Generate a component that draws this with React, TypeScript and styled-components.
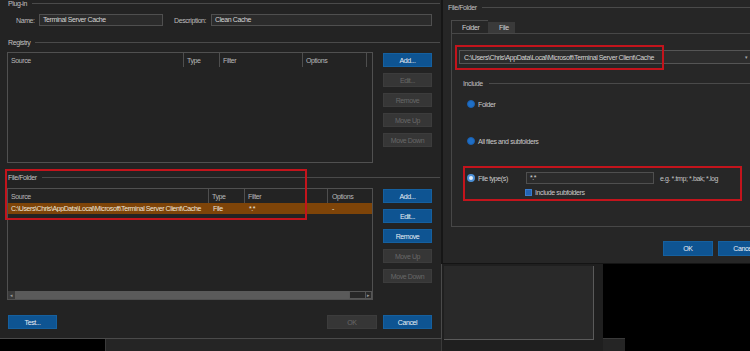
import React from 'react';
import styled, { createGlobalStyle } from 'styled-components';

const Global = createGlobalStyle`
  html, body { margin: 0; padding: 0; background: #000; }
  body {
    font-family: "Liberation Sans", Arial, sans-serif;
    font-size: 7px;
    letter-spacing: -0.4px;
    color: #cacaca;
  }
  * { box-sizing: border-box; }
`;

const Desktop = styled.div`
  position: relative;
  width: 750px;
  height: 351px;
  overflow: hidden;
  background: #000;
`;

const Window = styled.div<{ $x: number; $y: number; $w: number; $h: number; $bg: string }>`
  position: absolute;
  left: ${p => p.$x}px;
  top: ${p => p.$y}px;
  width: ${p => p.$w}px;
  height: ${p => p.$h}px;
  background: ${p => p.$bg};
  display: flex;
  flex-direction: column;
`;

const LeftDialog = styled(Window)`
  border-right: 1px solid #4a4a4a;
  border-bottom: 1px solid #4a4a4a;
  padding: 0 9px 0 7px;
`;

const RightDialog = styled(Window)`
  border-left: 2px solid #161616;
  border-bottom: 1px solid #141414;
  padding: 2px 0 0 4px;
`;

const BackWindow = styled(Window)`
  border-top: 1px solid #3a3a3a;
  border-left: 1px solid #3a3a3a;
`;

const BackPanel = styled.div`
  margin: 2px 0 0 2px;
  width: 150px;
  height: 74px;
  background: #292929;
  border-right: 1px solid #5a5a5a;
  border-bottom: 1px solid #5a5a5a;
`;

const GroupTitle = styled.div<{ $mt?: number; $right?: number }>`
  display: flex;
  align-items: center;
  gap: 5px;
  height: 10px;
  margin-top: ${p => p.$mt ?? 0}px;
  margin-right: ${p => -(p.$right ?? 0)}px;
  padding-left: 1px;
  color: #c0c0c0;
  white-space: nowrap;
  &::after {
    content: "";
    flex: 1;
    height: 1px;
    background: #4a4a4a;
  }
`;

const NameRow = styled.div`
  display: flex;
  align-items: center;
  height: 12px;
  margin-top: 6px;
  padding-left: 9px;
`;

const FieldLabel = styled.span<{ $w: number; $ml?: number }>`
  width: ${p => p.$w}px;
  margin-left: ${p => p.$ml ?? 0}px;
  color: #bcbcbc;
  white-space: nowrap;
`;

const TextBox = styled.div<{ $w?: number }>`
  ${p => (p.$w ? `width: ${p.$w}px;` : 'flex: 1;')}
  height: 12px;
  line-height: 10px;
  padding-left: 3px;
  background: #2b2b2b;
  border: 1px solid #4f4f4f;
  color: #d4d4d4;
  white-space: nowrap;
  overflow: hidden;
`;

const ListArea = styled.div<{ $mt: number }>`
  display: flex;
  gap: 10px;
  margin-top: ${p => p.$mt}px;
`;

const Table = styled.div<{ $h: number }>`
  width: 366px;
  height: ${p => p.$h}px;
  border: 1px solid #505050;
  background: #232323;
  display: flex;
  flex-direction: column;
  overflow: hidden;
`;

const HeaderRow = styled.div`
  display: flex;
  height: 14px;
  align-items: stretch;
  flex-shrink: 0;
`;

const HeaderCell = styled.div<{ $w?: number; $last?: boolean }>`
  ${p => (p.$w ? `width: ${p.$w}px;` : 'flex: 1;')}
  padding-left: ${p => (p.$w === undefined ? 4 : 3)}px;
  border-right: ${p => (p.$last ? 'none' : '1px solid #4e4e4e')};
  display: flex;
  align-items: center;
  color: #b8b8b8;
  white-space: nowrap;
`;

const DataRow = styled.div<{ $selected?: boolean }>`
  display: flex;
  height: 11px;
  align-items: center;
  flex-shrink: 0;
  background: ${p => (p.$selected ? '#7e4408' : 'transparent')};
  color: #eee6dc;
`;

const DataCell = styled.div<{ $w?: number }>`
  ${p => (p.$w ? `width: ${p.$w}px;` : 'flex: 1;')}
  padding-left: 4px;
  white-space: nowrap;
  overflow: hidden;
  &:first-child { padding-left: 3px; }
`;

const TableBody = styled.div`
  flex: 1;
`;

const ScrollBar = styled.div`
  display: flex;
  height: 8px;
  flex-shrink: 0;
  background: #2a2a2a;
`;

const ScrollButton = styled.div<{ $w: number; $boxed?: boolean }>`
  width: ${p => p.$w}px;
  display: flex;
  align-items: center;
  justify-content: center;
  font-size: 5px;
  letter-spacing: 0;
  color: #9a9a9a;
  background: ${p => (p.$boxed ? '#2a2a2a' : '#3a3a3a')};
  border: ${p => (p.$boxed ? '1px solid #555' : 'none')};
`;

const ScrollThumb = styled.div<{ $w: number }>`
  width: ${p => p.$w}px;
  background: #5a5a5a;
`;

const ScrollTrack = styled.div`
  flex: 1;
  border: 1px solid #565656;
  border-right: none;
  background: #272727;
`;

const ButtonColumn = styled.div<{ $mt: number }>`
  display: flex;
  flex-direction: column;
  gap: 6px;
  margin-top: ${p => p.$mt}px;
`;

const Button = styled.div<{ $variant?: 'primary' | 'disabled'; $w?: number; $h?: number }>`
  width: ${p => p.$w ?? 49}px;
  height: ${p => p.$h ?? 14}px;
  flex-shrink: 0;
  display: flex;
  align-items: center;
  justify-content: center;
  background: ${p => (p.$variant === 'primary' ? '#0e5492' : '#363636')};
  color: ${p => (p.$variant === 'primary' ? '#e8eef4' : '#686868')};
  border: 1px solid ${p => (p.$variant === 'primary' ? '#15609f' : '#3c3c3c')};
  white-space: nowrap;
`;

const Footer = styled.div`
  display: flex;
  align-items: center;
  gap: 6px;
  margin-top: 15px;
  padding-left: 1px;
`;

const Spacer = styled.div`
  flex: 1;
`;

/* Right dialog */

const TabBar = styled.div`
  display: flex;
  align-items: flex-end;
  margin: 8px 0 0 4px;
  height: 13px;
`;

const Tab = styled.div<{ $active?: boolean; $w: number }>`
  width: ${p => p.$w}px;
  height: ${p => (p.$active ? 13 : 11)}px;
  display: flex;
  align-items: center;
  padding-left: ${p => (p.$active ? 10 : 11)}px;
  background: ${p => (p.$active ? '#272727' : '#3a3a3a')};
  border-left: ${p => (p.$active ? '1px solid #4a4a4a' : 'none')};
  border-top: ${p => (p.$active ? '1px solid #4a4a4a' : 'none')};
  color: #d0d0d0;
`;

const TabPanel = styled.div`
  margin-left: 4px;
  height: 194px;
  width: 340px;
  border: 1px solid #474747;
  border-right: none;
  background: #272727;
  padding: 16px 0 0 7px;
  display: flex;
  flex-direction: column;
`;

const Combo = styled.div`
  height: 14px;
  width: 294px;
  border: 1px solid #555;
  background: #2d2d2d;
  display: flex;
  align-items: center;
  padding: 0 4px 0 4px;
  color: #d4d4d4;
  white-space: nowrap;
`;

const ComboArrow = styled.span`
  margin-left: auto;
  font-size: 5px;
  letter-spacing: 0;
  color: #aaa;
`;

const IncludeTitle = styled(GroupTitle)`
  padding-left: 4px;
  gap: 6px;
`;

const OptionRow = styled.div<{ $mt: number; $h?: number }>`
  display: flex;
  align-items: center;
  gap: 3px;
  height: ${p => p.$h ?? 10}px;
  margin-top: ${p => p.$mt}px;
  padding-left: 8px;
  white-space: nowrap;
`;

const Radio = styled.span<{ $checked?: boolean }>`
  width: 8px;
  height: 8px;
  border-radius: 50%;
  flex-shrink: 0;
  background: ${p => (p.$checked ? '#e3ecf6' : '#1f6fc6')};
  border: ${p => (p.$checked ? '2px solid #4b8fd6' : '1px solid #1a5fae')};
`;

const OptionLabel = styled.span<{ $w?: number }>`
  ${p => (p.$w ? `width: ${p.$w}px;` : '')}
  color: #cacaca;
`;

const Hint = styled.span`
  margin-left: 3px;
  color: #c4c4c4;
`;

const CheckRow = styled.div`
  display: flex;
  align-items: center;
  gap: 3px;
  height: 9px;
  margin-top: 4px;
  padding-left: 66px;
  color: #cacaca;
`;

const CheckBox = styled.span`
  width: 7px;
  height: 7px;
  background: #2463b3;
  border: 1px solid #3a7ccc;
`;

const DialogButtons = styled.div`
  display: flex;
  gap: 5px;
  margin-top: 14px;
  padding-left: 216px;
`;

const RedBox = styled.div<{ $x: number; $y: number; $w: number; $h: number }>`
  position: absolute;
  left: ${p => p.$x}px;
  top: ${p => p.$y}px;
  width: ${p => p.$w}px;
  height: ${p => p.$h}px;
  border: 2px solid #c3141c;
  pointer-events: none;
`;

const regCols = [176, 36, 83, 64];
const fileCols = [201, 36, 83];
const path = 'C:\\Users\\Chris\\AppData\\Local\\Microsoft\\Terminal Server Client\\Cache';

export default function App() {
  return (
    <>
      <Global />
      <Desktop>
        <BackWindow $x={105} $y={338} $w={520} $h={30} $bg="#252525" />
        <BackWindow $x={441} $y={263} $w={162} $h={100} $bg="#1f1f1f">
          <BackPanel />
        </BackWindow>

        <LeftDialog $x={0} $y={-2} $w={442} $h={341} $bg="#232323">
          <GroupTitle $right={8}>Plug-in</GroupTitle>
          <NameRow>
            <FieldLabel $w={23}>Name:</FieldLabel>
            <TextBox $w={124}>Terminal Server Cache</TextBox>
            <FieldLabel $w={37} $ml={11}>Description:</FieldLabel>
            <TextBox>Clean Cache</TextBox>
          </NameRow>

          <GroupTitle $mt={11} $right={8}>Registry</GroupTitle>
          <ListArea $mt={5}>
            <Table $h={111}>
              <HeaderRow>
                <HeaderCell $w={regCols[0]}>Source</HeaderCell>
                <HeaderCell $w={regCols[1]}>Type</HeaderCell>
                <HeaderCell $w={regCols[2]}>Filter</HeaderCell>
                <HeaderCell $w={regCols[3]}>Options</HeaderCell>
                <HeaderCell $last />
              </HeaderRow>
              <TableBody />
            </Table>
            <ButtonColumn $mt={1}>
              <Button $variant="primary">Add...</Button>
              <Button $variant="disabled">Edit...</Button>
              <Button $variant="disabled">Remove</Button>
              <Button $variant="disabled">Move Up</Button>
              <Button $variant="disabled">Move Down</Button>
            </ButtonColumn>
          </ListArea>

          <GroupTitle $mt={9} $right={8}>File/Folder</GroupTitle>
          <ListArea $mt={6}>
            <Table $h={112}>
              <HeaderRow>
                <HeaderCell $w={fileCols[0]}>Source</HeaderCell>
                <HeaderCell $w={fileCols[1]}>Type</HeaderCell>
                <HeaderCell $w={fileCols[2]}>Filter</HeaderCell>
                <HeaderCell $last>Options</HeaderCell>
              </HeaderRow>
              <DataRow $selected>
                <DataCell $w={fileCols[0]}>{path}</DataCell>
                <DataCell $w={fileCols[1]}>File</DataCell>
                <DataCell $w={fileCols[2]}>*.*</DataCell>
                <DataCell>-</DataCell>
              </DataRow>
              <TableBody />
              <ScrollBar>
                <ScrollButton $w={7}>◂</ScrollButton>
                <ScrollThumb $w={334} />
                <ScrollTrack />
                <ScrollButton $w={7} $boxed>▸</ScrollButton>
              </ScrollBar>
            </Table>
            <ButtonColumn $mt={1}>
              <Button $variant="primary">Add...</Button>
              <Button $variant="primary">Edit...</Button>
              <Button $variant="primary">Remove</Button>
              <Button $variant="disabled">Move Up</Button>
              <Button $variant="disabled">Move Down</Button>
            </ButtonColumn>
          </ListArea>

          <Footer>
            <Button $variant="primary">Test...</Button>
            <Spacer />
            <Button $variant="disabled" $w={50}>OK</Button>
            <Button $variant="primary">Cancel</Button>
          </Footer>
        </LeftDialog>

        <RightDialog $x={441} $y={0} $w={330} $h={264} $bg="#262626">
          <GroupTitle>
            <span>File/Folder</span>
          </GroupTitle>
          <TabBar>
            <Tab $active $w={37}>Folder</Tab>
            <Tab $w={27}>File</Tab>
          </TabBar>
          <TabPanel>
            <Combo>
              <span>{path}</span>
              <ComboArrow>▾</ComboArrow>
            </Combo>
            <IncludeTitle $mt={14}>Include</IncludeTitle>
            <OptionRow $mt={11}>
              <Radio />
              <OptionLabel>Folder</OptionLabel>
            </OptionRow>
            <OptionRow $mt={27}>
              <Radio />
              <OptionLabel>All files and subfolders</OptionLabel>
            </OptionRow>
            <OptionRow $mt={26} $h={12}>
              <Radio $checked />
              <OptionLabel $w={45}>File type(s)</OptionLabel>
              <TextBox $w={128}>*.*</TextBox>
              <Hint>e.g. *.tmp; *.bak; *.log</Hint>
            </OptionRow>
            <CheckRow>
              <CheckBox />
              <span>Include subfolders</span>
            </CheckRow>
          </TabPanel>
          <DialogButtons>
            <Button $variant="primary" $w={50} $h={15}>OK</Button>
            <Button $variant="primary" $w={50} $h={15}>Cancel</Button>
          </DialogButtons>
        </RightDialog>

        <RedBox $x={5} $y={169} $w={302} $h={51} />
        <RedBox $x={455} $y={45} $w={209} $h={25} />
        <RedBox $x={463} $y={166} $w={279} $h={35} />
      </Desktop>
    </>
  );
}
